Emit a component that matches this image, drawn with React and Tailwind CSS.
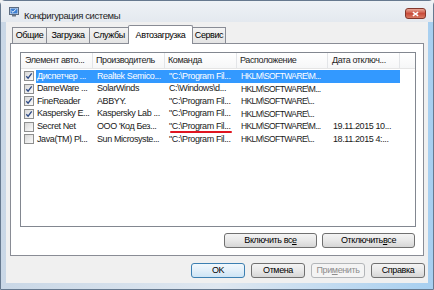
import React from "react"

const rows = [
    { on: true, sel: true, name: "Диспетчер ...", maker: "Realtek Semico...", cmd: "\"C:\\Program Fil...", loc: "HKLM\\SOFTWARE\\M...", date: "" },
    { on: true, name: "DameWare ...", maker: "SolarWinds", cmd: "C:\\Windows\\d...", loc: "HKLM\\SOFTWARE\\M...", date: "" },
    { on: true, name: "FineReader", maker: "ABBYY.", cmd: "\"C:\\Program Fil...", loc: "HKLM\\SOFTWARE\\...", date: "" },
    { on: true, name: "Kaspersky E...", maker: "Kaspersky Lab ...", cmd: "\"C:\\Program Fil...", loc: "HKLM\\SOFTWARE\\...", date: "" },
    { on: false, name: "Secret Net", maker: "ООО 'Код Без...", cmd: "\"C:\\Program Fil...", loc: "HKLM\\SOFTWARE\\M...", date: "19.11.2015 10..." },
    { on: false, name: "Java(TM) Pl...", maker: "Sun Microsyste...", cmd: "\"C:\\Program Fil...", loc: "HKLM\\SOFTWARE\\...", date: "18.11.2015 4:..." },
]

const tabs = [
    { label: "Общие", w: "w-[35px]" },
    { label: "Загрузка", w: "w-[44px]" },
    { label: "Службы", w: "w-[40px]" },
    { label: "Автозагрузка", w: "w-[65px]", active: true },
    { label: "Сервис", w: "w-[34px]" },
]

function Check({ on }) {
    return (
        <div className="w-[10px] h-[10px] border border-[#8e8f8f] bg-gradient-to-br from-[#d8d8d8] to-[#fbfbfb] flex items-center justify-center">
            {on && (
                <svg viewBox="0 0 8 8" className="w-[8px] h-[8px]">
                    <path d="M1.3 4.2 L3.1 6.2 L6.7 1.4" fill="none" stroke="#2d4a86" strokeWidth="1.3" />
                </svg>
            )}
        </div>
    )
}

function Btn({ children, className = "", def, disabled }) {
    let look = "border-[#707070] text-black bg-gradient-to-b from-[#f4f4f4] via-[#e8e8e8] to-[#d6d6d6]"
    if (def) look = "border-[#3c7fb1] text-black bg-gradient-to-b from-[#f1f8fd] via-[#e2eff9] to-[#cde4f5]"
    if (disabled) look = "border-[#b3b6b9] text-[#8d8d8d] bg-[#f4f4f4]"
    return (
        <div className={"h-[15px] rounded-[3px] border flex items-center justify-center text-[9px] leading-none whitespace-nowrap " + look + " " + className}>
            {children}
        </div>
    )
}

export default function App() {
    return (
        <div className="relative w-[434px] h-[290px] overflow-hidden bg-[#f0f0f0] font-['Liberation_Sans',Arial,sans-serif] tracking-[-0.4px] text-black">
            <div className="w-full h-full flex flex-col border border-[#66798f] rounded-t-[5px] bg-gradient-to-r from-[#c9d7e6] via-[#dfe7f0] to-[#a7cff0]">
                {/* title bar */}
                <div className="h-[21px] flex items-start pl-[8px] pr-[7px] bg-gradient-to-b from-[#eef2f6] to-[#e4e9ef]">
                    <svg viewBox="0 0 10 10" className="w-[10px] h-[10px] mt-[6px]">
                        <rect x="0.5" y="0.5" width="9" height="7" fill="#dde3ea" stroke="#5b6b80" />
                        <rect x="1.5" y="1.5" width="7" height="5" fill="#3d7fd1" />
                        <path d="M2.5 4 L4 5.3 L7 2.2" fill="none" stroke="#fff" strokeWidth="1" />
                        <rect x="3" y="8" width="4" height="1.5" fill="#6a7789" />
                    </svg>
                    <span className="ml-[5px] mt-[8px] text-[9.5px] leading-[13px] tracking-[-0.4px] text-[#1e1e1e]">Конфигурация системы</span>
                    <div className="flex-1" />
                    <div className="mt-[7px] w-[21px] h-[11px] rounded-[3px] border border-[#83372b] bg-gradient-to-b from-[#e9a99a] via-[#c94c3b] to-[#d97a63] flex items-center justify-center">
                        <svg viewBox="0 0 8 6" className="w-[7px] h-[6px]">
                            <path d="M1 0.8 L7 5.2 M7 0.8 L1 5.2" stroke="#fff" strokeWidth="1.6" />
                        </svg>
                    </div>
                </div>

                {/* client area */}
                <div className="flex-1 mx-[5px] mb-[6px] bg-[#f0f0f0] flex flex-col pt-[3px] px-[4px]">
                    <div className="flex items-end h-[18px] ml-[2px]">
                        {tabs.map(t => (
                            <div key={t.label}
                                className={"flex items-center justify-center border border-[#898c95] border-b-0 text-[9px] leading-none whitespace-nowrap -mr-px " + t.w + " " +
                                    (t.active ? "h-[19px] -mb-px relative z-10 bg-white rounded-t-[2px]" : "h-[16px] bg-gradient-to-b from-[#f3f3f3] to-[#e4e4e4]")}>
                                {t.label}
                            </div>
                        ))}
                    </div>

                    <div className="h-[213px] border border-[#898c95] bg-white pt-[8px] pl-[9px] pr-[7px] flex flex-col">
                        {/* list view */}
                        <div className="h-[175px] border border-[#828790] bg-white flex flex-col">
                            <div className="h-[16px] flex items-center text-[9px] whitespace-nowrap text-[#1e1e1e] bg-gradient-to-b from-white to-[#f6f7f8] border-b border-[#e5e5e5]">
                                <div className="w-[72px] pl-[4px] border-r border-[#e3e5e8] h-full flex items-center">Элемент авто...</div>
                                <div className="w-[72px] pl-[3px] border-r border-[#e3e5e8] h-full flex items-center">Производитель</div>
                                <div className="w-[72px] pl-[3px] border-r border-[#e3e5e8] h-full flex items-center">Команда</div>
                                <div className="w-[91px] pl-[3px] border-r border-[#e3e5e8] h-full flex items-center">Расположение</div>
                                <div className="w-[72px] pl-[4px] border-r border-[#e3e5e8] h-full flex items-center">Дата отключ...</div>
                            </div>
                            <div className="pt-[1px] text-[9px]">
                                {rows.map(r => (
                                    <div key={r.name} className="h-[12.6px] flex items-center">
                                        <div className="w-[15px] pl-[3px] flex items-center">
                                            <Check on={r.on} />
                                        </div>
                                        <div className={"w-[364px] h-full flex items-center whitespace-nowrap " + (r.sel ? "bg-[#3399ff] text-white" : "text-[#1a1a1a]")}>
                                            <div className="w-[57px] pl-[1px] overflow-hidden">{r.name}</div>
                                            <div className="w-[72px] pl-[4px] overflow-hidden">{r.maker}</div>
                                            <div className="w-[72px] pl-[4px] overflow-hidden">{r.cmd}</div>
                                            <div className="w-[91px] pl-[4px] overflow-hidden text-[8.5px] tracking-[-0.6px]">{r.loc}</div>
                                            <div className="w-[72px] pl-[5px] overflow-hidden">{r.date}</div>
                                        </div>
                                    </div>
                                ))}
                            </div>
                        </div>

                        <div className="mt-[6px] flex justify-end gap-[5px] pr-[1px]">
                            <Btn className="w-[93px]">Включить вс<u>е</u></Btn>
                            <Btn className="w-[93px]">Отключить <u>в</u>се</Btn>
                        </div>
                    </div>

                    <div className="mt-[7px] flex justify-end gap-[6px] -mr-px">
                        <Btn className="w-[54px]" def>OK</Btn>
                        <Btn className="w-[54px]">Отмена</Btn>
                        <Btn className="w-[54px]" disabled>При<u>м</u>енить</Btn>
                        <Btn className="w-[54px]">Справка</Btn>
                    </div>
                </div>
            </div>

            {/* red annotation strokes */}
            <div className="absolute left-[129px] top-[41px] w-[63px] h-[2px] rounded-full bg-[#e0151f]" />
            <div className="absolute left-[170px] top-[131px] w-[62px] h-[2px] rounded-full bg-[#e0151f]" />
        </div>
    )
}
